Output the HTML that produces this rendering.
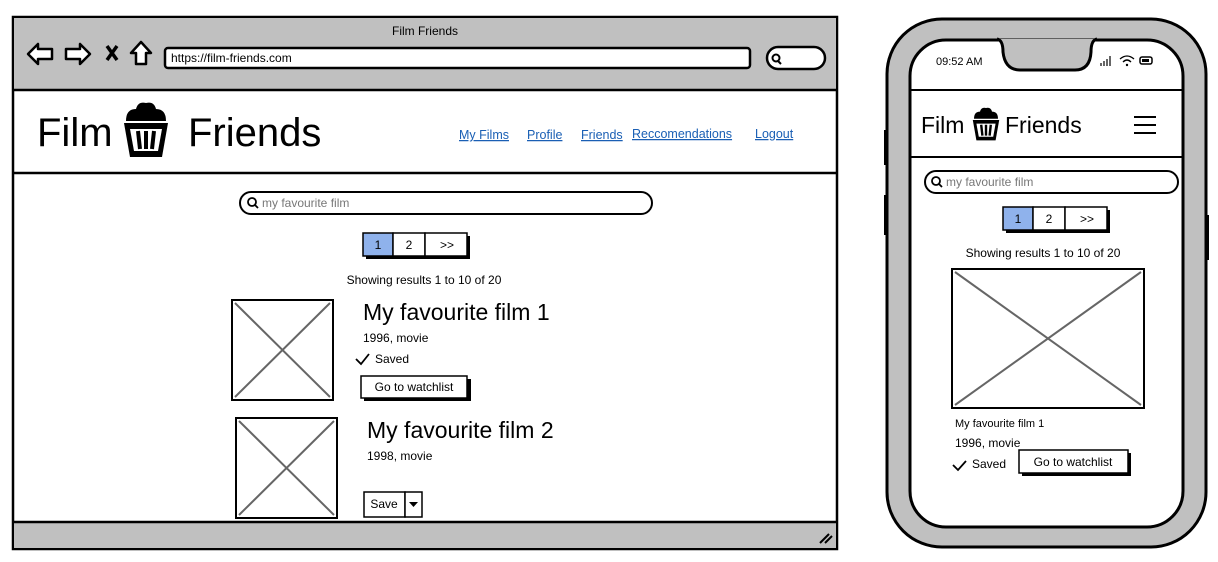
<!DOCTYPE html>
<html><head><meta charset="utf-8"><style>
html,body{margin:0;padding:0;background:#fff;}
svg{display:block}
text{font-family:"Liberation Sans",sans-serif;fill:#000}
.lk{fill:#1a5fb4;text-decoration:underline}
</style></head><body>
<svg width="1218" height="562" viewBox="0 0 1218 562" xmlns="http://www.w3.org/2000/svg">
<defs>
<g id="pop">
 <path d="M-20,-12 Q-20,-24 -10,-24 Q-8,-32 0,-30 Q8,-32 10,-24 Q20,-24 20,-12 Z" fill="#000"/>
 <path d="M-22,-10 L22,-10 L16,24 L-16,24 Z" fill="#000"/>
 <path d="M-16,-4 L16,-4 L12,18 L-12,18 Z" fill="#fff"/>
 <path d="M-8,-2 L-6,16 M0,-2 L0,16 M8,-2 L6,16" stroke="#000" stroke-width="4"/>
</g>
</defs>
<!-- Browser -->
<rect x="13" y="17" width="824" height="532" fill="#fff" stroke="#000" stroke-width="2.5"/>
<rect x="14" y="18" width="822" height="72" fill="#c0c0c0"/>
<line x1="13" y1="90" x2="837" y2="90" stroke="#000" stroke-width="2.5"/>
<text x="425" y="35" font-size="12" text-anchor="middle">Film Friends</text>
<path d="M28,54 L38,44 L38,49 L52,49 L52,59 L38,59 L38,64 Z" fill="#fff" stroke="#000" stroke-width="2.5" stroke-linejoin="round"/>
<path d="M90,54 L80,44 L80,49 L66,49 L66,59 L80,59 L80,64 Z" fill="#fff" stroke="#000" stroke-width="2.5" stroke-linejoin="round"/>
<path d="M107,46 L117,60 M117,46 L107,60" stroke="#000" stroke-width="3.5"/>
<path d="M141,42 L151,53 L146,53 L146,64 L136,64 L136,53 L131,53 Z" fill="#fff" stroke="#000" stroke-width="2.5" stroke-linejoin="round"/>
<rect x="165" y="48" width="585" height="20" rx="3" fill="#fff" stroke="#000" stroke-width="2.5"/>
<text x="171" y="62" font-size="12">https://film-friends.com</text>
<rect x="767" y="47" width="58" height="22" rx="11" fill="#fff" stroke="#000" stroke-width="2.5"/>
<circle cx="776" cy="58" r="3.5" fill="none" stroke="#000" stroke-width="2"/>
<line x1="778" y1="61" x2="781" y2="64" stroke="#000" stroke-width="2"/>
<line x1="13" y1="173" x2="837" y2="173" stroke="#000" stroke-width="2.5"/>
<text x="37" y="146" font-size="40">Film</text>
<use href="#pop" transform="translate(146,133)"/>
<text x="188" y="146" font-size="40">Friends</text>
<text x="459" y="139" font-size="12.5" class="lk">My Films</text>
<text x="527" y="139" font-size="12.5" class="lk">Profile</text>
<text x="581" y="139" font-size="12.5" class="lk">Friends</text>
<text x="632" y="138" font-size="12.5" class="lk">Reccomendations</text>
<text x="755" y="138" font-size="12.5" class="lk">Logout</text>
<rect x="240" y="192" width="412" height="22" rx="11" fill="#fff" stroke="#000" stroke-width="2"/>
<circle cx="252" cy="202" r="4" fill="none" stroke="#000" stroke-width="1.8"/>
<line x1="255" y1="205" x2="258" y2="208" stroke="#000" stroke-width="1.8"/>
<text x="262" y="207" font-size="12" style="fill:#777">my favourite film</text>
<rect x="366" y="236" width="104" height="23" fill="#000"/>
<rect x="363" y="233" width="30" height="23" fill="#8fb2ec" stroke="#000" stroke-width="1.5"/>
<rect x="393" y="233" width="32" height="23" fill="#fff" stroke="#000" stroke-width="1.5"/>
<rect x="425" y="233" width="42" height="23" fill="#fff" stroke="#000" stroke-width="1.5"/>
<text x="378" y="249" font-size="12" text-anchor="middle">1</text>
<text x="409" y="249" font-size="12" text-anchor="middle">2</text>
<text x="447" y="249" font-size="12" text-anchor="middle">&gt;&gt;</text>
<text x="424" y="284" font-size="12" text-anchor="middle">Showing results 1 to 10 of 20</text>
<rect x="232" y="300" width="101" height="100" fill="#fff" stroke="#000" stroke-width="2"/>
<path d="M235,303 L330,397 M330,303 L235,397" stroke="#666" stroke-width="2"/>
<text x="363" y="320" font-size="23">My favourite film 1</text>
<text x="363" y="342" font-size="12">1996, movie</text>
<path d="M356,359 L361,364 L369,354" fill="none" stroke="#000" stroke-width="1.8"/>
<text x="375" y="363" font-size="12">Saved</text>
<rect x="364" y="379" width="107" height="22" fill="#000"/>
<rect x="361" y="376" width="106" height="22" fill="#fff" stroke="#000" stroke-width="1.5"/>
<text x="414" y="391" font-size="12" text-anchor="middle">Go to watchlist</text>
<rect x="236" y="418" width="101" height="100" fill="#fff" stroke="#000" stroke-width="2"/>
<path d="M239,421 L334,515 M334,421 L239,515" stroke="#666" stroke-width="2"/>
<text x="367" y="438" font-size="23">My favourite film 2</text>
<text x="367" y="460" font-size="12">1998, movie</text>
<rect x="364" y="492" width="41" height="25" fill="#fff" stroke="#000" stroke-width="1.5"/>
<rect x="405" y="492" width="17" height="25" fill="#fff" stroke="#000" stroke-width="1.5"/>
<text x="384" y="508" font-size="12" text-anchor="middle">Save</text>
<path d="M409,502 L418,502 L413.5,507 Z" fill="#000"/>
<rect x="14" y="522" width="822" height="26" fill="#c0c0c0"/>
<line x1="13" y1="522" x2="837" y2="522" stroke="#000" stroke-width="2.5"/>
<path d="M820,543 L829,534 M825,543 L832,536" stroke="#000" stroke-width="2"/>
<!-- Phone -->
<rect x="884" y="130" width="6" height="35" fill="#000"/>
<rect x="884" y="195" width="6" height="40" fill="#000"/>
<rect x="1203" y="215" width="6" height="45" fill="#000"/>
<rect x="887" y="19" width="319" height="528" rx="55" fill="#c0c0c0" stroke="#000" stroke-width="3"/>
<rect x="910" y="40" width="273" height="487" rx="36" fill="#fff" stroke="#000" stroke-width="3"/>
<path d="M997,39 Q1003,40 1003,52 Q1005,70 1020,70 L1075,70 Q1090,70 1091,52 Q1091,40 1097,39" fill="#c0c0c0" stroke="#000" stroke-width="3"/>
<text x="936" y="65" font-size="11">09:52 AM</text>
<path d="M1101,66 v-3 M1104,66 v-5 M1107,66 v-7 M1110,66 v-10" stroke="#000" stroke-width="1.2"/>
<path d="M1120,59 Q1127,53 1134,59 M1123,62 Q1127,58 1131,62" fill="none" stroke="#000" stroke-width="1.3"/>
<circle cx="1127" cy="65" r="1.2" fill="#000"/>
<rect x="1140" y="57" width="12" height="7" rx="2" fill="#fff" stroke="#000" stroke-width="1.5"/>
<rect x="1142" y="59" width="7" height="3" fill="#000"/>
<line x1="911" y1="90" x2="1182" y2="90" stroke="#000" stroke-width="2"/>
<line x1="911" y1="157" x2="1182" y2="157" stroke="#000" stroke-width="2"/>
<text x="921" y="133" font-size="23">Film</text>
<use href="#pop" transform="translate(986,126) scale(0.6)"/>
<text x="1005" y="133" font-size="23">Friends</text>
<path d="M1134,117 h22 M1134,125 h22 M1134,133 h22" stroke="#000" stroke-width="2"/>
<rect x="925" y="171" width="253" height="22" rx="11" fill="#fff" stroke="#000" stroke-width="2"/>
<circle cx="936" cy="181" r="4" fill="none" stroke="#000" stroke-width="1.8"/>
<line x1="939" y1="184" x2="942" y2="187" stroke="#000" stroke-width="1.8"/>
<text x="946" y="186" font-size="12" style="fill:#777">my favourite film</text>
<rect x="1006" y="210" width="104" height="23" fill="#000"/>
<rect x="1003" y="207" width="30" height="23" fill="#8fb2ec" stroke="#000" stroke-width="1.5"/>
<rect x="1033" y="207" width="32" height="23" fill="#fff" stroke="#000" stroke-width="1.5"/>
<rect x="1065" y="207" width="42" height="23" fill="#fff" stroke="#000" stroke-width="1.5"/>
<text x="1018" y="223" font-size="12" text-anchor="middle">1</text>
<text x="1049" y="223" font-size="12" text-anchor="middle">2</text>
<text x="1087" y="223" font-size="12" text-anchor="middle">&gt;&gt;</text>
<text x="1043" y="257" font-size="12" text-anchor="middle">Showing results 1 to 10 of 20</text>
<rect x="952" y="269" width="192" height="139" fill="#fff" stroke="#000" stroke-width="2"/>
<path d="M955,272 L1141,405 M1141,272 L955,405" stroke="#666" stroke-width="2"/>
<text x="955" y="427" font-size="11">My favourite film 1</text>
<text x="955" y="447" font-size="12">1996, movie</text>
<path d="M953,465 L958,470 L966,461" fill="none" stroke="#000" stroke-width="1.8"/>
<text x="972" y="468" font-size="12">Saved</text>
<rect x="1022" y="453" width="109" height="23" fill="#000"/>
<rect x="1019" y="450" width="109" height="23" fill="#fff" stroke="#000" stroke-width="1.5"/>
<text x="1073" y="466" font-size="12" text-anchor="middle">Go to watchlist</text>
</svg>
</body></html>
